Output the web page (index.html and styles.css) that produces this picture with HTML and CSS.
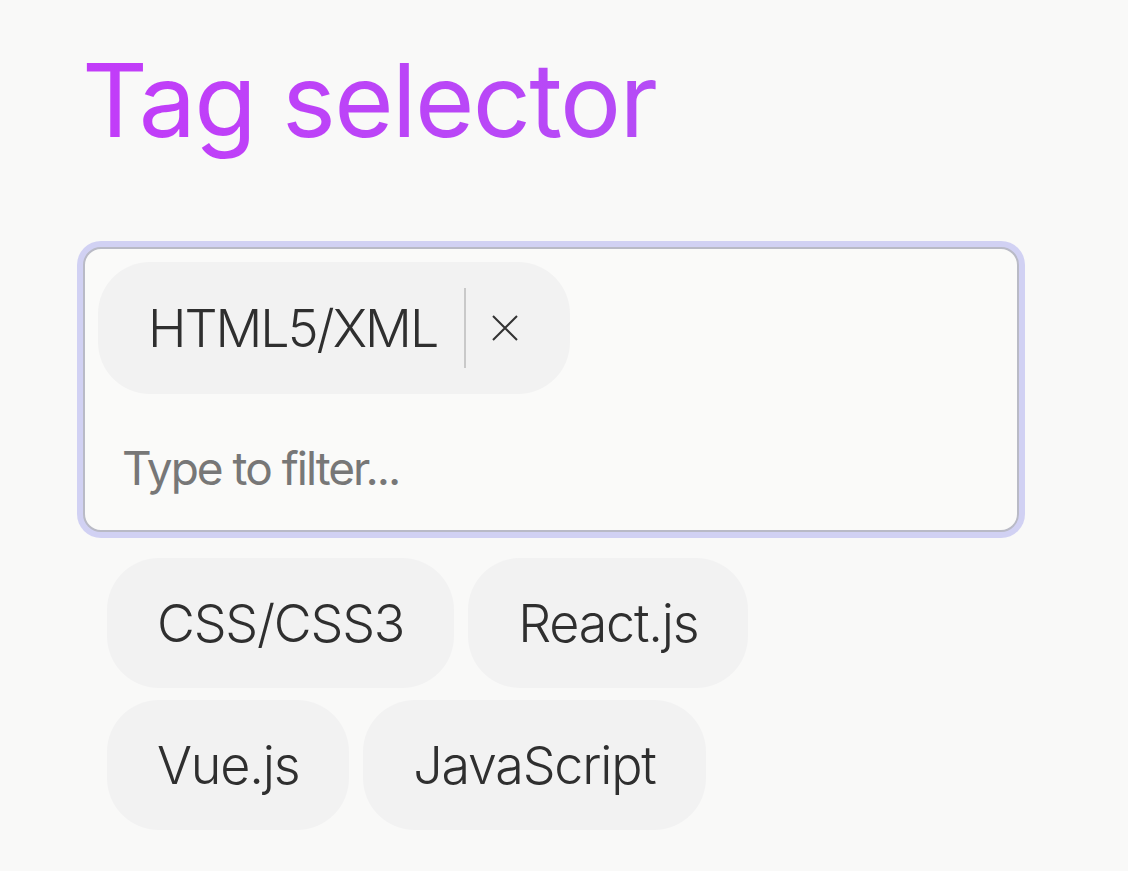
FILE: index.html
```html
<!DOCTYPE html>
<html lang="en">
<head>
<meta charset="utf-8">
<title>Tag selector</title>
<link rel="stylesheet" href="styles.css">
</head>
<body>
<main class="page">
  <h1 class="title">Tag selector</h1>
  <div class="selector">
    <div class="selected">
      <span class="tag tag-selected">
        <span class="tag-label">HTML5/XML</span>
        <span class="tag-divider"></span>
        <button class="tag-remove" type="button" aria-label="Remove HTML5/XML">
          <svg viewBox="0 0 26 26" width="26" height="26"><path d="M1 1 L25 25 M25 1 L1 25" stroke="#333" stroke-width="2" fill="none"/></svg>
        </button>
      </span>
    </div>
    <input class="filter" type="text" placeholder="Type to filter...">
  </div>
  <div class="options">
    <span class="tag">CSS/CSS3</span>
    <span class="tag">React.js</span>
    <span class="tag">Vue.js</span>
    <span class="tag">JavaScript</span>
  </div>
</main>
</body>
</html>
```

FILE: styles.css
```css
* { box-sizing: border-box; }

body {
  margin: 0;
  background: #f9f9f8;
  font-family: Inter, "Noto Sans", sans-serif;
  color: #333;
}

.page {
  padding: 39px 0 0 83px;
  width: 1019px;
}

.title {
  margin: 0 0 86px -1px;
  font-size: 102px;
  font-weight: 400;
  line-height: 122px;
  letter-spacing: -1.7px;
  background: linear-gradient(90deg, #c23cf9, #b54cf6);
  -webkit-background-clip: text;
  background-clip: text;
  color: transparent;
  display: inline-block;
}

.selector {
  display: flex;
  flex-direction: column;
  width: 936px;
  padding: 13px;
  border: 2px solid #b9bac6;
  border-radius: 18px;
  background: #fafaf9;
  box-shadow: 0 0 0 6px #d1d1f3;
}

.selected {
  display: flex;
  flex-wrap: wrap;
  gap: 12px;
}

.tag {
  display: inline-flex;
  align-items: center;
  height: 130px;
  padding: 0 50px;
  border-radius: 52px;
  background: #f2f2f2;
  font-size: 52px;
  font-weight: 300;
  letter-spacing: -1.2px;
  color: #2f2f2f;
  white-space: nowrap;
}

.tag-selected {
  height: 132px;
  padding-right: 0;
}

.tag-selected .tag-label {
  letter-spacing: -2px;
}

.tag-divider {
  width: 2px;
  height: 80px;
  background: #c9c9c9;
  margin-left: 27px;
}

.tag-remove {
  display: flex;
  align-items: center;
  justify-content: center;
  border: 0;
  background: none;
  padding: 0 52px 0 26px;
  height: 100%;
  cursor: pointer;
}

.filter {
  margin-top: 25px;
  height: 98px;
  padding: 0 0 0 24px;
  border: 0;
  outline: none;
  background: transparent;
  font-family: Inter, "Noto Sans", sans-serif;
  font-size: 46px;
  font-weight: 400;
  letter-spacing: -2px;
  color: #333;
}

.filter::placeholder {
  color: #777;
}

.options {
  display: flex;
  flex-wrap: wrap;
  gap: 12px 14px;
  margin-top: 26px;
  padding-left: 24px;
  width: 700px;
}
```
